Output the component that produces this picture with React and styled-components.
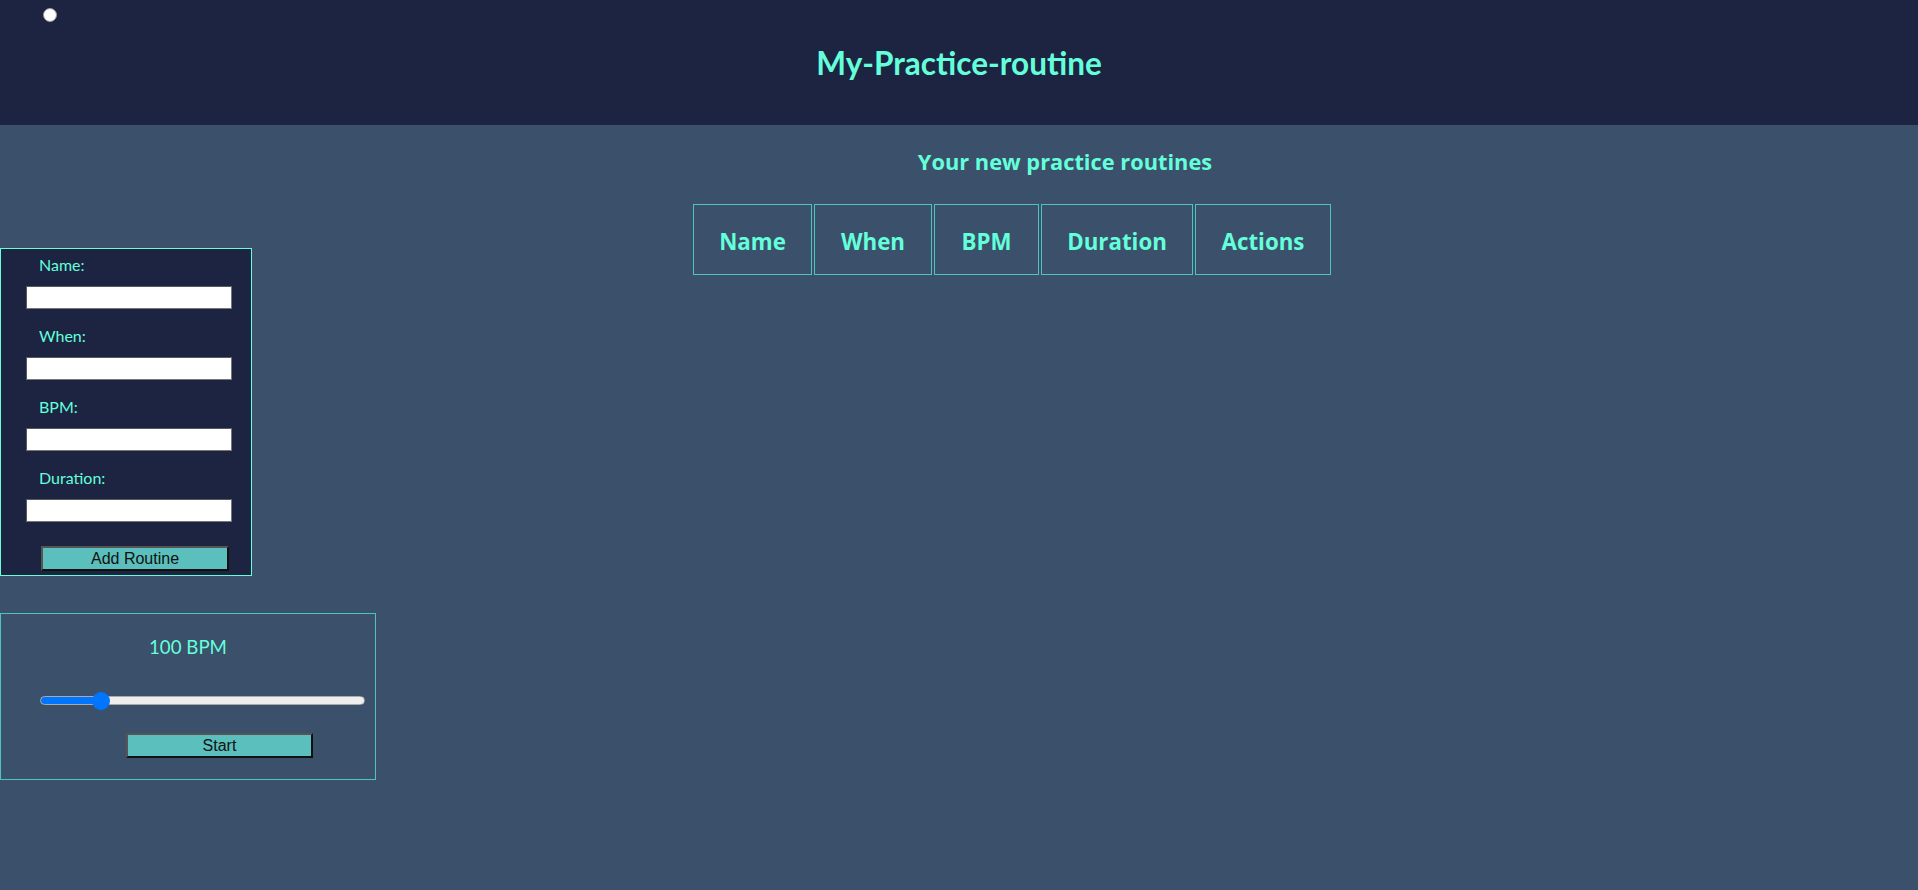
import React, { useState } from "react";
import styled, { createGlobalStyle } from "styled-components";

const AQUA = "#64ffda";
const TEAL = "#4fc3c1";
const NAVY = "#1c2442";
const SLATE = "#3b506b";
const UI_FONT = `Lato, "Open Sans", sans-serif`;
const HEAVY_FONT = `"Open Sans", "Noto Sans", sans-serif`;

const GlobalStyle = createGlobalStyle`
  html, body { margin: 0; padding: 0; }
  body {
    background: ${SLATE};
    font-family: ${UI_FONT};
    min-height: 890px;
  }
  * { box-sizing: border-box; }
`;

const Header = styled.header`
  background: ${NAVY};
  height: 125px;
  padding: 8px 0 0 43px;
  display: flex;
  flex-direction: column;
`;

const ThemeRadio = styled.input.attrs({ type: "radio" })`
  appearance: none;
  -webkit-appearance: none;
  width: 14px;
  height: 14px;
  margin: 0;
  border-radius: 50%;
  background: #fff;
  border: 1px solid #9a9a9a;
`;

const Title = styled.h1`
  margin: 21px 0 0 -43px;
  text-align: center;
  color: ${AQUA};
  font-size: 31.5px;
  font-weight: 700;
  line-height: 40px;
`;

const Main = styled.main`
  display: flex;
  flex-direction: column;
`;

const SectionTitle = styled.h2`
  margin: 21px 0 0;
  padding-left: 212px;
  text-align: center;
  color: ${AQUA};
  font-family: ${HEAVY_FONT};
  font-size: 21.8px;
  font-weight: 700;
  line-height: 32px;
`;

const Row = styled.div`
  display: flex;
  align-items: flex-start;
  margin-top: 24px;
`;

const SideColumn = styled.div`
  width: 376px;
  margin-top: 46px;
  display: flex;
  flex-direction: column;
  gap: 37px;
`;

const FormBox = styled.form`
  width: 252px;
  background: ${NAVY};
  border: 1px solid ${AQUA};
  padding: 5px 19px 4px 25px;
  display: flex;
  flex-direction: column;
  align-items: flex-start;
`;

const Field = styled.div`
  display: flex;
  flex-direction: column;
  align-items: flex-start;
  margin-bottom: 16px;
`;

const Label = styled.label`
  margin-left: 13px;
  color: ${AQUA};
  font-size: 16px;
  line-height: 22px;
  margin-bottom: 10px;
`;

const TextInput = styled.input.attrs({ type: "text" })`
  width: 206px;
  height: 23px;
  margin: 0;
  background: #fff;
  border: 1px solid #767676;
  border-top-color: #5a5a5a;
  border-left-color: #5a5a5a;
  font-family: ${UI_FONT};
  font-size: 14px;
`;

const ActionButton = styled.button`
  width: ${(p) => p.$width}px;
  height: 25px;
  margin: ${(p) => p.$margin};
  padding: 0;
  background: #5bbfbd;
  color: #111;
  font-family: "Liberation Sans", Arial, sans-serif;
  font-size: 16px;
  line-height: 20px;
  border-style: solid;
  border-width: 2px;
  border-color: #555 #111 #111 #555;
  cursor: pointer;
`;

const MetronomeBox = styled.div`
  width: 376px;
  border: 1px solid ${TEAL};
  padding: 21px 0 21px;
  display: flex;
  flex-direction: column;
  align-items: flex-start;
`;

const BpmReadout = styled.div`
  align-self: stretch;
  text-align: center;
  color: ${AQUA};
  font-size: 18.7px;
  line-height: 25px;
`;

const Slider = styled.input.attrs({ type: "range" })`
  -webkit-appearance: none;
  -moz-appearance: none;
  appearance: none;
  display: block;
  width: 325px;
  height: 19px;
  margin: 31px 0 0 39px;
  padding: 0;
  background: transparent;

  &::-webkit-slider-runnable-track {
    height: 9px;
    border-radius: 5px;
    border: 1px solid #a9a9a9;
    background: linear-gradient(to right, #0075ff var(--fill), #efefef var(--fill));
  }
  &::-webkit-slider-thumb {
    -webkit-appearance: none;
    width: 18px;
    height: 18px;
    margin-top: -5.5px;
    border-radius: 50%;
    background: #0075ff;
    border: none;
  }
  &::-moz-range-track {
    height: 9px;
    border-radius: 5px;
    border: 1px solid #a9a9a9;
    background: #efefef;
  }
  &::-moz-range-progress {
    height: 9px;
    border-radius: 5px;
    background: #0075ff;
  }
  &::-moz-range-thumb {
    width: 18px;
    height: 18px;
    border-radius: 50%;
    background: #0075ff;
    border: none;
  }
`;

const Table = styled.table`
  margin-left: 315px;
  border-spacing: 2px;
  border-collapse: separate;
`;

const HeadCell = styled.th`
  width: ${(p) => p.$w}px;
  height: 71px;
  padding: 3px 0 0;
  border: 1px solid ${TEAL};
  color: ${AQUA};
  font-family: ${HEAVY_FONT};
  font-size: 22.3px;
  font-weight: 700;
  text-align: center;
`;

const columns = [
  { label: "Name", w: 119 },
  { label: "When", w: 118 },
  { label: "BPM", w: 105 },
  { label: "Duration", w: 152 },
  { label: "Actions", w: 136 },
];

const fields = ["Name:", "When:", "BPM:", "Duration:"];

export default function App() {
  const [bpm, setBpm] = useState(100);
  const min = 40;
  const max = 400;
  const fill = 9 + ((bpm - min) / (max - min)) * (325 - 18);

  return (
    <>
      <GlobalStyle />
      <Header>
        <ThemeRadio name="theme" aria-label="Toggle theme" />
        <Title>My-Practice-routine</Title>
      </Header>
      <Main>
        <SectionTitle>Your new practice routines</SectionTitle>
        <Row>
          <SideColumn>
            <FormBox onSubmit={(e) => e.preventDefault()}>
              {fields.map((f) => (
                <Field key={f}>
                  <Label>{f}</Label>
                  <TextInput />
                </Field>
              ))}
              <ActionButton type="submit" $width={188} $margin="8px 0 0 15px">
                Add Routine
              </ActionButton>
            </FormBox>
            <MetronomeBox>
              <BpmReadout>{bpm} BPM</BpmReadout>
              <Slider
                min={min}
                max={max}
                value={bpm}
                onChange={(e) => setBpm(Number(e.target.value))}
                style={{ "--fill": `${fill}px` }}
              />
              <ActionButton type="button" $width={187} $margin="23px 0 0 125px">
                Start
              </ActionButton>
            </MetronomeBox>
          </SideColumn>
          <Table>
            <thead>
              <tr>
                {columns.map((c) => (
                  <HeadCell key={c.label} $w={c.w}>
                    {c.label}
                  </HeadCell>
                ))}
              </tr>
            </thead>
          </Table>
        </Row>
      </Main>
    </>
  );
}
